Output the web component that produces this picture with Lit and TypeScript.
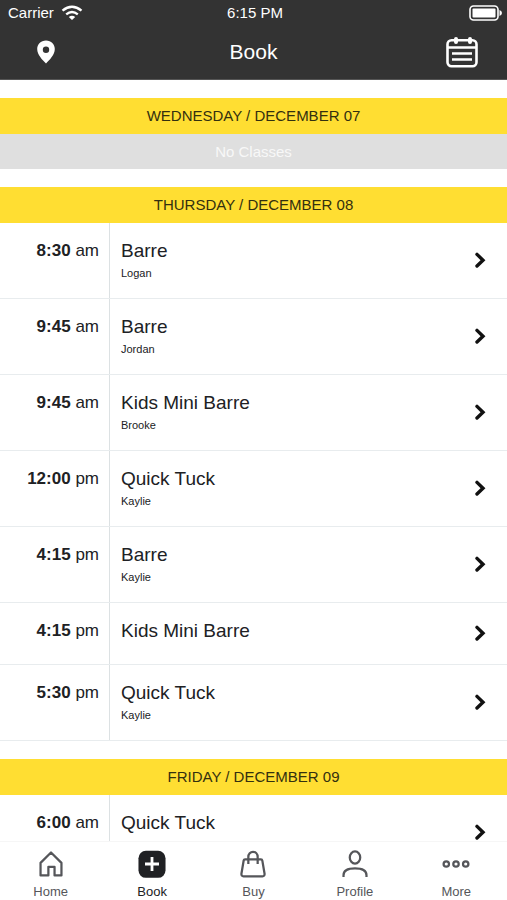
import { LitElement, html, css, svg, nothing } from "lit";
import { customElement, property } from "lit/decorators.js";
import { classMap } from "lit/directives/class-map.js";

interface ClassSlot {
  time: string;
  period: string;
  name: string;
  /** Left out when nobody teaches the class; empty while still to be announced. */
  teacher?: string;
}

interface Day {
  label: string;
  slots: ClassSlot[];
}

const days: Day[] = [
  { label: "WEDNESDAY / DECEMBER 07", slots: [] },
  {
    label: "THURSDAY / DECEMBER 08",
    slots: [
      { time: "8:30", period: "am", name: "Barre", teacher: "Logan" },
      { time: "9:45", period: "am", name: "Barre", teacher: "Jordan" },
      { time: "9:45", period: "am", name: "Kids Mini Barre", teacher: "Brooke" },
      { time: "12:00", period: "pm", name: "Quick Tuck", teacher: "Kaylie" },
      { time: "4:15", period: "pm", name: "Barre", teacher: "Kaylie" },
      { time: "4:15", period: "pm", name: "Kids Mini Barre" },
      { time: "5:30", period: "pm", name: "Quick Tuck", teacher: "Kaylie" },
    ],
  },
  {
    label: "FRIDAY / DECEMBER 09",
    slots: [{ time: "6:00", period: "am", name: "Quick Tuck", teacher: "" }],
  },
];

const tabs = [
  {
    label: "Home",
    icon: svg`<path d="M3.8 13.8 L15 2.6 L26.200 13.8 V27.300 H18.800 V18 H12.200 V27.300 H3.8 Z" />`,
  },
  {
    label: "Book",
    icon: svg`<rect class="solid" x="0.5" y="0.800" width="29" height="29" rx="8" /><path class="plus" d="M15 7.500 V22.500 M7.500 15 H22.500" />`,
  },
  {
    label: "Buy",
    icon: svg`<path d="M6.5 10 H23.5 Q24.8 10 25 11.3 L27.4 25.4 Q27.6 28.2 25.2 28.2 H4.8 Q2.4 28.2 2.6 25.4 L5 11.3 Q5.2 10 6.5 10 Z M10 15 V7.500 A5 5.5 0 0 1 20 7.500 V15" />`,
  },
  {
    label: "Profile",
    icon: svg`<ellipse cx="15" cy="8" rx="5.6" ry="6.500" /><path d="M2.7 28.8 V27 C2.7 22 7.5 19.800 15 19.800 S27.3 22 27.3 27 V28.8" />`,
  },
  {
    label: "More",
    icon: svg`<circle cx="4.600" cy="15" r="2.9" /><circle cx="15" cy="15" r="2.9" /><circle cx="25.400" cy="15" r="2.9" />`,
  },
];

@customElement("class-row")
export class ClassRow extends LitElement {
  @property({ attribute: false }) slotData!: ClassSlot;

  static styles = css`
    :host {
      display: block;
    }
    .row {
      display: flex;
      align-items: stretch;
      width: 100%;
      padding: 0;
      border: 0;
      border-bottom: 1px solid #e8ecee;
      background: #fff;
      color: #202124;
      font: inherit;
      text-align: left;
      cursor: pointer;
    }
    .time {
      flex: none;
      box-sizing: border-box;
      width: 110px;
      padding: 16px 10px 0 0;
      border-right: 1px solid #dce1e3;
      font-size: 17px;
      line-height: 24px;
      text-align: right;
    }
    .info {
      flex: 1;
      padding: 16px 0 17px 11px;
    }
    .name,
    .teacher {
      display: block;
    }
    .name {
      font-size: 19px;
      line-height: 24px;
    }
    .short .info {
      padding-bottom: 21px;
    }
    .teacher {
      min-height: 16px;
      padding-top: 2px;
      font-size: 11px;
      line-height: 16px;
    }
    .chevron {
      flex: none;
      align-self: center;
      width: 14px;
      height: 18px;
      margin-right: 20px;
      fill: none;
      stroke: #111;
      stroke-width: 3.4;
      stroke-linecap: round;
    }
  `;

  render() {
    const s = this.slotData;
    return html`
      <button class=${classMap({ row: true, short: s.teacher === undefined })} type="button">
        <span class="time"><b>${s.time}</b> ${s.period}</span>
        <span class="info">
          <span class="name">${s.name}</span>
          ${s.teacher === undefined ? nothing : html`<span class="teacher">${s.teacher}</span>`}
        </span>
        <svg class="chevron" viewBox="0 0 14 18" aria-hidden="true">
          <path d="M4 2.4 L10 8.2 L4 14" />
        </svg>
      </button>
    `;
  }
}

@customElement("app-root")
export class AppRoot extends LitElement {
  static styles = css`
    :host {
      display: flex;
      flex-direction: column;
      height: 100vh;
      background: #fff;
      color: #202124;
      font-family: "Liberation Sans", Arial, Helvetica, sans-serif;
    }
    header {
      flex: none;
      background: #333;
      color: #fff;
      border-bottom: 1px solid #555;
    }
    .status,
    .nav {
      display: grid;
      grid-template-columns: 1fr auto 1fr;
      align-items: center;
    }
    .status {
      height: 25px;
      padding: 0 5px 0 8px;
      font-size: 15px;
    }
    .carrier {
      display: flex;
      align-items: center;
      gap: 7px;
    }
    .wifi,
    .battery,
    .pin,
    .calendar {
      display: block;
    }
    .battery {
      justify-self: end;
    }
    .nav {
      height: 54px;
      padding: 0 24px;
    }
    h1 {
      margin: 0;
      font-size: 21px;
      font-weight: 400;
    }
    .icon-button {
      padding: 4px;
      border: 0;
      background: none;
      color: #fff;
      cursor: pointer;
    }
    .place {
      justify-self: start;
    }
    .dates {
      justify-self: end;
    }
    main {
      flex: 1;
      min-height: 0;
      overflow-y: auto;
      scrollbar-width: none;
    }
    .day {
      margin-top: 18px;
    }
    h2 {
      margin: 0;
      background: #ffde32;
      color: #33300f;
      font-size: 15px;
      font-weight: 400;
      line-height: 36px;
      text-align: center;
    }
    .empty {
      margin: 0;
      background: #dfdfdf;
      color: #f8f8f8;
      font-size: 15px;
      line-height: 35px;
      text-align: center;
    }
    .list {
      margin: 0;
      padding: 0;
      list-style: none;
    }
    .tabs {
      flex: none;
      display: grid;
      grid-template-columns: repeat(5, 1fr);
      height: 58px;
      border-top: 1px solid #f6f6f6;
      background: #fff;
    }
    .tab {
      display: flex;
      flex-direction: column;
      align-items: center;
      gap: 6px;
      padding-top: 8px;
      color: #55565a;
      font-size: 13px;
      line-height: 16px;
      text-decoration: none;
    }
    .tab svg {
      width: 28px;
      height: 28px;
      fill: none;
      stroke: #55565a;
      stroke-width: 2.4;
      stroke-linejoin: round;
    }
    .current {
      color: #202124;
    }
    .tab .solid {
      fill: #202124;
      stroke: none;
    }
    .tab .plus {
      stroke: #fff;
      stroke-width: 3;
    }
  `;

  render() {
    return html`
      <header>
        <div class="status">
          <span class="carrier">
            Carrier
            <svg class="wifi" width="22" height="16" viewBox="0 0 22 16" fill="none" stroke="#fff" stroke-width="2.4" aria-hidden="true">
              <path d="M1.5 5.6 Q11 -2.2 20.5 5.6 M5.2 9.4 Q11 4.8 16.8 9.4" />
              <path d="M11 15 L7.8 11.9 Q11 9.4 14.2 11.9 Z" fill="#fff" stroke="none" />
            </svg>
          </span>
          <span>6:15 PM</span>
          <svg class="battery" width="33" height="16" viewBox="0 0 33 16" aria-hidden="true">
            <rect x="1" y="1" width="28" height="14" rx="3.5" fill="none" stroke="#fff" stroke-width="1.6" />
            <rect x="3.5" y="3.5" width="23" height="9" rx="1" fill="#fff" />
            <path d="M30.5 5 Q33 6 33 8 T30.5 11 Z" fill="#fff" />
          </svg>
        </div>
        <div class="nav">
          <button class="icon-button place" type="button" aria-label="Locations">
            <svg class="pin" width="36" height="24" viewBox="0 0 36 24" aria-hidden="true">
              <path
                fill="#fff"
                fill-rule="evenodd"
                d="M18 .5 C12.8 .5 9.2 4.3 9.2 9 C9.2 14.8 14.5 20 18 23.5 C21.5 20 26.8 14.8 26.8 9 C26.8 4.3 23.2 .5 18 .5 Z M18 6.5 A3.2 3.2 0 1 1 18 12.9 A3.2 3.2 0 1 1 18 6.5 Z"
              />
            </svg>
          </button>
          <h1>Book</h1>
          <button class="icon-button dates" type="button" aria-label="Calendar">
            <svg class="calendar" width="34" height="32" viewBox="0 0 34 32" fill="none" stroke="#fff" stroke-width="2.6" aria-hidden="true">
              <rect x="2.5" y="4.3" width="29" height="26" rx="4" />
              <path d="M2.5 11.5 H31.5 M7 17.5 H27 M7 23.5 H27" />
              <path d="M11 3 V6 M25 3 V6" stroke-width="4" stroke-linecap="round" />
            </svg>
          </button>
        </div>
      </header>
      <main>
        ${days.map(
          (day) => html`
            <section class="day">
              <h2>${day.label}</h2>
              ${day.slots.length
                ? html`<ul class="list">
                    ${day.slots.map((s) => html`<li><class-row .slotData=${s}></class-row></li>`)}
                  </ul>`
                : html`<p class="empty">No Classes</p>`}
            </section>
          `
        )}
      </main>
      <nav class="tabs">
        ${tabs.map(
          (t) => html`
            <a class=${classMap({ tab: true, current: t.label === "Book" })} href="#${t.label.toLowerCase()}">
              <svg viewBox="0 0 30 30" aria-hidden="true">${t.icon}</svg>
              ${t.label}
            </a>
          `
        )}
      </nav>
    `;
  }
}
